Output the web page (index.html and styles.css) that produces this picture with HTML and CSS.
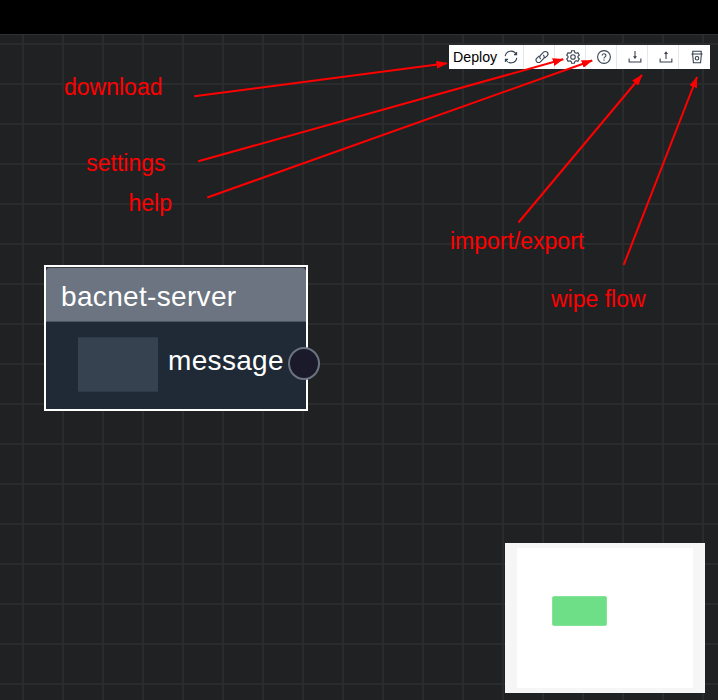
FILE: index.html
```html
<!DOCTYPE html>
<html lang="en">
<head>
<meta charset="utf-8">
<title>Flow editor</title>
<link rel="stylesheet" href="styles.css">
</head>
<body>
<header class="topbar"></header>
<main class="canvas">
  <nav class="toolbar">
    <button class="tool deploy">Deploy
      <svg viewBox="0 0 16 16"><path d="M1.4 7A6.7 6.7 0 0 1 14 5M14.6 9A6.7 6.7 0 0 1 2 11M14.4 2.2V5.3H11.4M1.6 13.8V10.7H4.6"/></svg>
    </button>
    <button class="tool"><svg viewBox="0 0 16 16"><path d="M6.6 10.4a3 3 0 0 1-.4-4.3L9.8 2.5a2.8 2.8 0 0 1 4.1 4.1L11 9.4M9.4 5.6a3 3 0 0 1 .4 4.3L6.2 13.5a2.8 2.8 0 0 1-4.1-4.1L5 6.6"/></svg></button>
    <button class="tool"><svg viewBox="0 0 16 16"><path d="M6.4.8h3.2l.5 2.1 1.4.8 2.1-.6 1.6 2.8L13.7 7.2v1.6l1.5 1.3-1.6 2.8-2.1-.6-1.4.8-.5 2.1H6.4l-.5-2.1-1.4-.8-2.1.6L.8 10.1l1.5-1.3V7.2L.8 5.9l1.6-2.8 2.1.6 1.4-.8z"/><circle cx="8" cy="8" r="2.6"/></svg></button>
    <button class="tool"><svg viewBox="0 0 16 16"><circle cx="8" cy="8" r="7.3"/><path d="M5.8 6.4C5.8 3.5 10.2 3.5 10.2 6.3 10.2 8 8 7.8 8 9.6M8 10.9v1.3"/></svg></button>
    <button class="tool"><svg viewBox="0 0 16 16"><path d="M1.3 9.8v4h13.4v-4M8 1.2v7"/><path class="solid" d="M5.7 7.2h4.6L8 10.4z"/></svg></button>
    <button class="tool"><svg viewBox="0 0 16 16"><path d="M1.3 9.8v4h13.4v-4M8 10.4v-7"/><path class="solid" d="M5.7 4.7h4.6L8 1.5z"/></svg></button>
    <button class="tool"><svg viewBox="0 0 16 16"><path d="M3.2 4.2V1.5h9.6v2.7M1.6 4.6h12.8M3 4.6l.9 10h8.2l.9-10"/><circle cx="8" cy="9.4" r="2"/></svg></button>
  </nav>

  <section class="node">
    <h1 class="node-title">bacnet-server</h1>
    <div class="node-body">
      <span class="node-value"></span>
      <span class="node-label">message</span>
    </div>
    <i class="port"></i>
  </section>

  <aside class="minimap"><div class="minimap-view"><i class="minimap-node"></i></div></aside>
</main>

<svg class="notes" viewBox="0 0 718 700">
  <defs>
    <marker id="head" markerUnits="userSpaceOnUse" markerWidth="11" markerHeight="8" refX="10.5" refY="4" orient="auto"><path d="M0 0 11 4 0 8z"/></marker>
  </defs>
  <g class="arrows">
    <path d="M194.3 96.3 447 63.3"/>
    <path d="M198.3 161.3 563.3 59.2"/>
    <path d="M207.3 197.5 592.2 60.5"/>
    <path d="M518.5 222.5 642 75"/>
    <path d="M623.7 265 697 77"/>
  </g>
  <text x="64" y="95">download</text>
  <text x="86.3" y="171">settings</text>
  <text x="128.5" y="211">help</text>
  <text x="450" y="249">import/export</text>
  <text x="551" y="307">wipe flow</text>
</svg>
</body>
</html>
```

FILE: styles.css
```css
* { box-sizing: border-box; }

body {
  position: relative;
  width: 718px;
  height: 700px;
  margin: 0;
  overflow: hidden;
  font-family: "Liberation Sans", Arial, sans-serif;
}

.topbar { height: 34px; background: #000; }

.canvas {
  position: relative;
  height: 666px;
  border-top: 1px solid #303133;
  background-color: #202123;
  background-image:
    linear-gradient(90deg, #2a2b2d 2px, transparent 2px),
    linear-gradient(#2a2b2d 2px, transparent 2px);
  background-size: 40px 40px;
  background-position: 22px 8px;
}

.toolbar {
  position: absolute;
  top: 10px;
  right: 8px;
  display: flex;
  height: 24px;
  background: #fff;
}

.tool {
  display: flex;
  align-items: center;
  justify-content: flex-end;
  width: 31px;
  padding: 0 5px 0 0;
  border: 0;
  border-right: 1px solid #e5e7eb;
  background: #fff;
  color: #000;
  font: 14.2px "Liberation Sans", Arial, sans-serif;
}

.tool:last-child { border-right-color: #fff; }

.deploy {
  justify-content: space-between;
  width: 75px;
  padding-left: 4px;
}

.tool svg {
  width: 14px;
  height: 14px;
  fill: none;
  stroke: #374151;
  stroke-width: 1.25;
}

.tool .solid { fill: #374151; stroke: none; }

.node {
  position: absolute;
  left: 44px;
  top: 230px;
  width: 264px;
  height: 146px;
  border: 2px solid #fff;
  background: #1f2a36;
  color: #fff;
  letter-spacing: .33px;
}

.node-title {
  height: 55px;
  margin: 0;
  padding-left: 15px;
  border-top: 1px solid #393c43;
  border-bottom: 1px solid #4b5563;
  border-radius: 4px 4px 0 0;
  background: #6b7480;
  font-size: 28px;
  font-weight: 400;
  line-height: 57px;
}

.node-body {
  display: flex;
  gap: 10px;
  padding: 15px 0 0 32px;
}

.node-value {
  width: 80px;
  height: 55px;
  border: solid #2f3a47;
  border-width: 1px 0;
  background: #374250;
}
.node-label { font-size: 28px; line-height: 48px; }

.port {
  position: absolute;
  left: 242px;
  top: 80px;
  width: 32px;
  height: 33px;
  border: 2px solid #6b7480;
  border-radius: 50%;
  background: #1b1a2b;
}

.minimap {
  position: absolute;
  right: 13px;
  bottom: 7px;
  width: 200px;
  height: 150px;
  padding: 5px 12px;
  background: #f6f6f6;
}

.minimap-view {
  height: 140px;
  padding: 48px 0 0 35px;
  background: #fff;
}

.minimap-node {
  display: block;
  width: 55px;
  height: 30px;
  border: 1px solid #86e39a;
  border-radius: 2px;
  background: #6fdf87;
}

.notes {
  position: absolute;
  inset: 0;
  width: 718px;
  height: 700px;
  fill: #f00;
  font-size: 23px;
  pointer-events: none;
}

.arrows { fill: none; stroke: #f00; stroke-width: 2; }
.arrows path { marker-end: url(#head); }
#head path { fill: #f00; stroke: none; }
```
